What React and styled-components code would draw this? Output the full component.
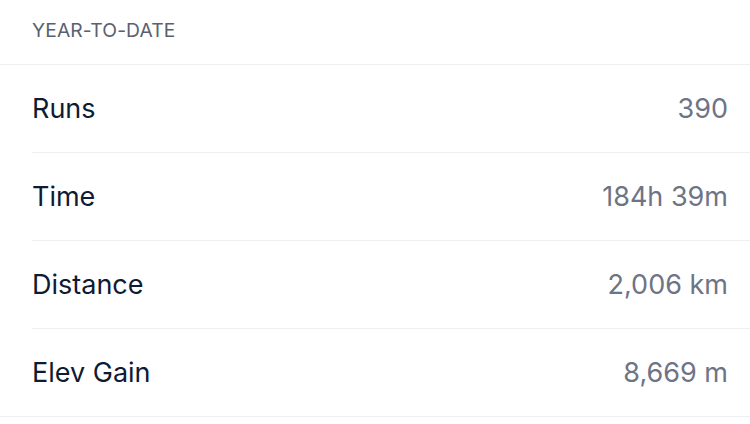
import React from 'react';
import styled, { createGlobalStyle } from 'styled-components';

const GlobalStyle = createGlobalStyle`
  body {
    margin: 0;
    background: #ffffff;
    font-family: Inter, "Noto Sans", sans-serif;
  }
`;

const stats = [
  { label: 'Runs', value: '390' },
  { label: 'Time', value: '184h 39m' },
  { label: 'Distance', value: '2,006 km' },
  { label: 'Elev Gain', value: '8,669 m' },
];

const App = () => (
  <>
    <GlobalStyle />
    <Section>
      <Header>YEAR-TO-DATE</Header>
      <List>
        {stats.map((s, i) => (
          <Row key={s.label} last={i === stats.length - 1}>
            <Label>{s.label}</Label>
            <Value>{s.value}</Value>
          </Row>
        ))}
      </List>
    </Section>
  </>
);

const border = '#eef0f3';

const Section = styled.section`
  width: 750px;
  background: #fff;
`;

const Header = styled.div`
  height: 65px;
  display: flex;
  align-items: center;
  padding: 0 32px;
  padding-bottom: 5px;
  box-sizing: border-box;
  border-bottom: 1px solid ${border};
  color: #5b6070;
  font-size: 19.3px;
  letter-spacing: 0.1px;
`;

const List = styled.div`
  padding-left: 32px;
  border-bottom: 1px solid ${border};
`;

const Row = styled.div`
  height: 87px;
  display: flex;
  align-items: center;
  justify-content: space-between;
  padding-right: 22px;
  ${(p) => !p.last && `border-bottom: 1px solid ${border};`}
`;

const Label = styled.span`
  color: #0f1a33;
  font-size: 27px;
`;

const Value = styled.span`
  color: #6e7386;
  font-size: 27px;
`;

export default App;
